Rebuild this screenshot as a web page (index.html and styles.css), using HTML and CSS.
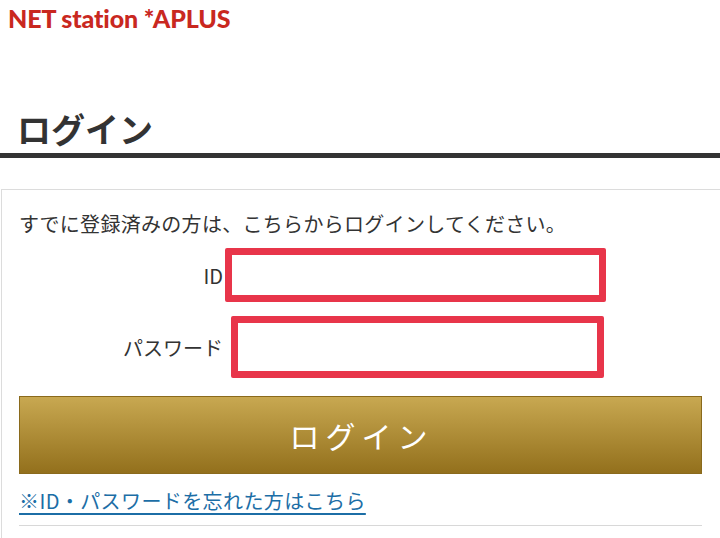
FILE: index.html
```html
<!DOCTYPE html>
<html lang="ja">
<head>
<meta charset="utf-8">
<title>ログイン</title>
<link rel="stylesheet" href="styles.css">
</head>
<body>
<header class="site-header">
  <div class="logo">NET station *APLUS</div>
</header>
<h1 class="page-title">ログイン</h1>
<section class="login-box">
  <p class="lead">すでに登録済みの方は、こちらからログインしてください。</p>
  <div class="form-grid">
    <label class="field-label" for="uid">ID</label>
    <input class="field field-id" id="uid" type="text">
    <label class="field-label" for="pw">パスワード</label>
    <input class="field field-pw" id="pw" type="password">
  </div>
  <button class="login-btn" type="button">ログイン</button>
  <div class="forgot"><a href="#">※ID・パスワードを忘れた方はこちら</a></div>
</section>
</body>
</html>
```

FILE: styles.css
```css
html, body {
  margin: 0;
  padding: 0;
  background: #fff;
  overflow: hidden;
}
body {
  font-family: "Noto Sans CJK JP", "Noto Sans", sans-serif;
  color: #333;
  width: 720px;
  height: 538px;
}
.site-header {
  height: 40px;
  padding: 3px 0 0 8px;
  box-sizing: border-box;
}
.logo {
  font-family: Lato, "Liberation Sans", sans-serif;
  font-weight: 900;
  font-size: 25px;
  line-height: 30px;
  color: #c9281f;
  letter-spacing: -0.15px;
}
.page-title {
  margin: 66px 0 0 0;
  padding: 0 0 0 17px;
  font-size: 34px;
  font-weight: 700;
  line-height: 46px;
  color: #333;
  border-bottom: 5px solid #333;
  height: 47px;
}
.login-box {
  margin: 31px 0 0 1px;
  border-top: 1px solid #dcdcdc;
  border-left: 1px solid #dcdcdc;
  padding: 19px 17px 0 17px;
  height: 340px;
}
.lead {
  margin: 0;
  font-size: 20px;
  line-height: 30px;
  letter-spacing: 0.3px;
  color: #333;
}
.form-grid {
  display: grid;
  grid-template-columns: 204px auto;
  align-items: center;
  row-gap: 14px;
  margin-top: 9px;
}
.field-label {
  text-align: right;
  font-size: 20px;
  color: #333;
}
.field {
  box-sizing: border-box;
  border: 7px solid #e8354a;
  border-radius: 2px;
  background: #fff;
  outline: none;
  padding: 0;
}
.field-id {
  width: 381px;
  height: 54px;
  margin-left: 2px;
}
.field-pw {
  width: 373px;
  height: 62px;
  margin-left: 8px;
}
.login-btn {
  display: block;
  width: 683px;
  height: 78px;
  margin-top: 18px;
  border: 1px solid #8a6a1c;
  background: linear-gradient(#c8a851, #93701c);
  color: #fff;
  font-family: "Noto Sans CJK JP", sans-serif;
  font-size: 30px;
  letter-spacing: 6px;
  padding: 0 0 0 2px;
  cursor: pointer;
}
.forgot {
  width: 683px;
  padding: 14px 0 11px 0;
  border-bottom: 1px solid #d8d8d8;
  font-size: 20px;
  line-height: 26px;
  letter-spacing: 0.4px;
}
.forgot a {
  color: #1c6ea6;
  text-decoration: underline;
  text-underline-offset: 4px;
}
```
